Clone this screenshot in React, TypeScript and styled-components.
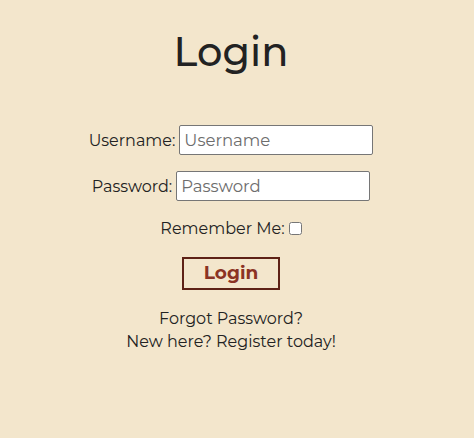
import React from "react";
import styled, { createGlobalStyle } from "styled-components";

const Global = createGlobalStyle`
  html, body { margin: 0; padding: 0; }
  body {
    background: #f3e6cc;
    font-family: Montserrat, "Noto Sans", "DejaVu Sans", sans-serif;
    color: #222;
    width: 474px;
    height: 438px;
    overflow: hidden;
  }
`;

const Page = styled.main`
  width: 462px;
  display: flex;
  flex-direction: column;
  align-items: center;
`;

const Title = styled.h1`
  margin: 28px 0 0;
  font-size: 40px;
  font-weight: 500;
  line-height: 48px;
  color: #222;
`;

const Form = styled.form`
  margin-top: 49px;
  display: flex;
  flex-direction: column;
  align-items: center;
`;

const Row = styled.div<{ $mt?: number }>`
  display: flex;
  align-items: center;
  gap: 4px;
  margin-top: ${(p) => p.$mt ?? 0}px;
  font-size: 16px;
`;

const Label = styled.label`
  font-size: 16px;
  color: #222;
`;

const Input = styled.input`
  box-sizing: border-box;
  width: 194px;
  height: 30px;
  padding: 2px 4px;
  border: 1px solid #767676;
  border-radius: 2px;
  background: #fff;
  font-family: inherit;
  font-size: 16.5px;
  color: #222;
  &::placeholder { color: #6d6d6d; }
`;

const Check = styled.input`
  margin: 0;
  width: 13px;
  height: 13px;
`;

const Button = styled.button`
  margin-top: 19px;
  box-sizing: border-box;
  width: 98px;
  height: 33px;
  border: 2px solid #5e2216;
  background: transparent;
  color: #8b3324;
  font-family: inherit;
  font-weight: 700;
  font-size: 18.5px;
  line-height: 1;
  padding: 0;
`;

const Links = styled.div`
  margin-top: 17px;
  display: flex;
  flex-direction: column;
  align-items: center;
  font-size: 16px;
  line-height: 23px;
  color: #222;
`;

export default function App() {
  return (
    <>
      <Global />
      <Page>
        <Title>Login</Title>
        <Form onSubmit={(e) => e.preventDefault()}>
          <Row>
            <Label htmlFor="u">Username:</Label>
            <Input id="u" placeholder="Username" />
          </Row>
          <Row $mt={16}>
            <Label htmlFor="p">Password:</Label>
            <Input id="p" type="password" placeholder="Password" />
          </Row>
          <Row $mt={18}>
            <Label htmlFor="r">Remember Me:</Label>
            <Check id="r" type="checkbox" />
          </Row>
          <Button type="submit">Login</Button>
        </Form>
        <Links>
          <span>Forgot Password?</span>
          <span>New here? Register today!</span>
        </Links>
      </Page>
    </>
  );
}
